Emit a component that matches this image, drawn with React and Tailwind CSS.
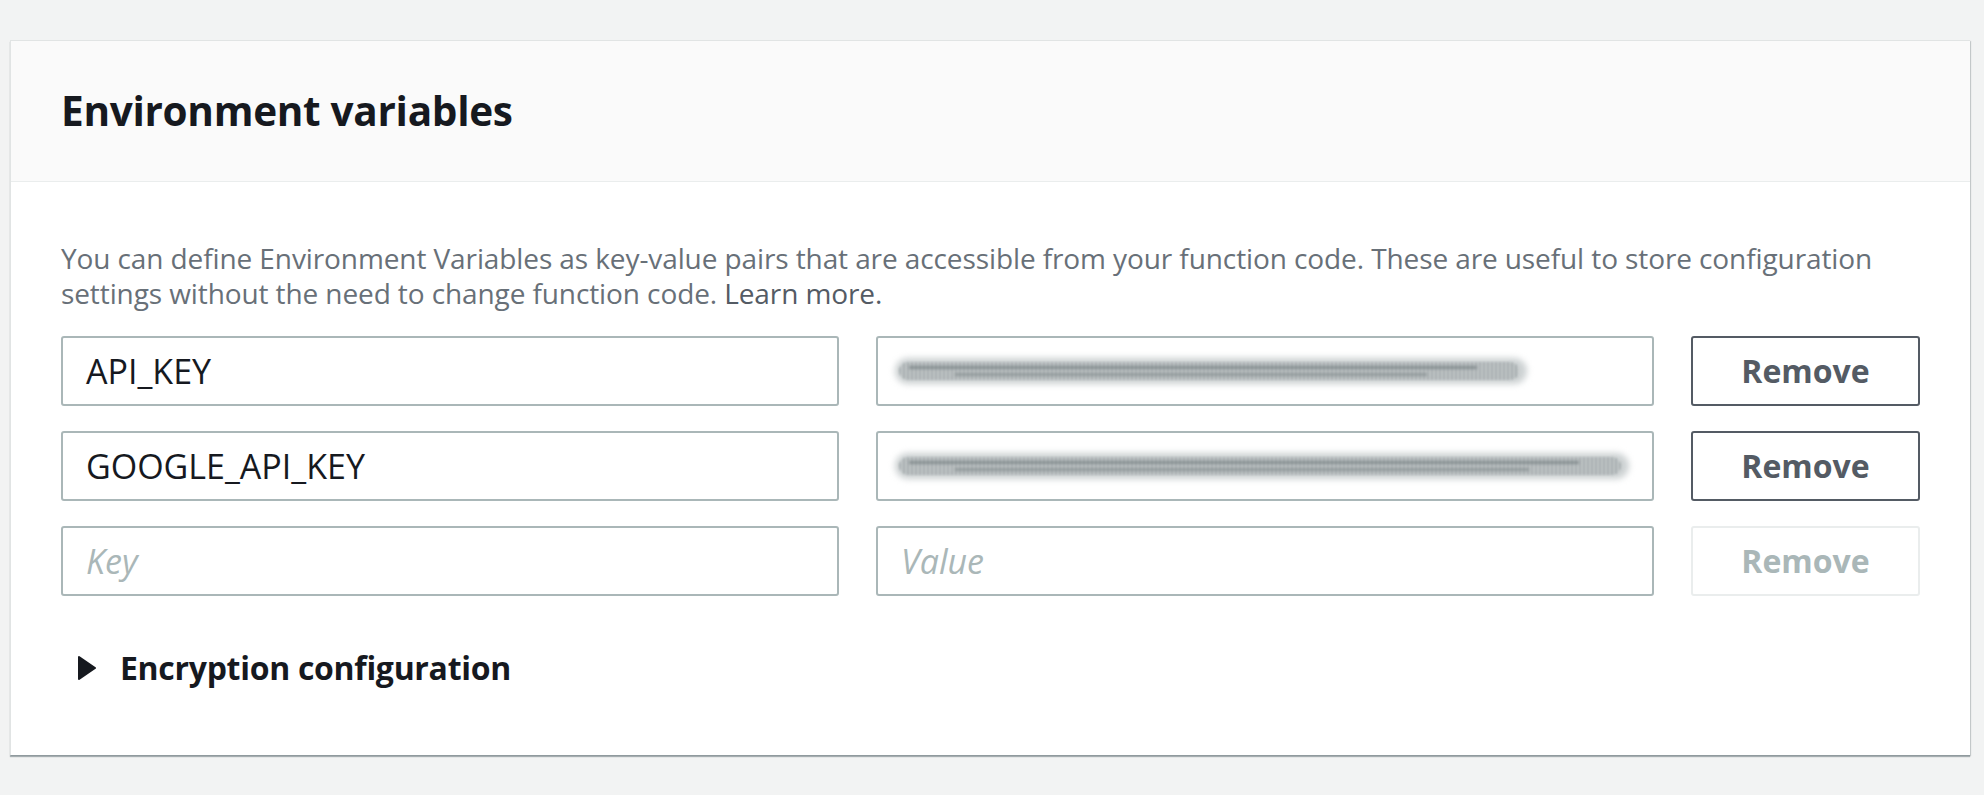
import React from 'react';

const rows = [
    { key: 'API_KEY', blur: 'w-[632px]' },
    { key: 'GOOGLE_API_KEY', blur: 'w-[750px]' },
];

function Smudge({ width }) {
    // redacted value, drawn as a blurred scribble
    return (
        <div className={`relative -ml-[6px] h-[30px] ${width}`}>
            <div className="absolute inset-x-0 top-[2px] h-[26px] rounded-full bg-[#ccd1d2] blur-[3px]" />
            <div className="absolute left-[4px] right-[8px] top-[6px] h-[18px] rounded-full bg-[repeating-linear-gradient(90deg,#959d9f_0px,#959d9f_2px,#c4c9ca_2px,#c4c9ca_4px)] blur-[1px] opacity-75" />
            <div className="absolute left-[14px] right-[50px] top-[10px] h-[3px] bg-[#7a8386] blur-[1.5px] opacity-80" />
            <div className="absolute left-[60px] right-[100px] top-[17px] h-[3px] bg-[#838c8e] blur-[1.5px] opacity-70" />
        </div>
    );
}

function Field({ children }) {
    return (
        <div className="h-[70px] min-w-0 border-2 border-[#aab7b8] rounded-[3px] bg-white flex items-center px-[23px] overflow-hidden">
            {children}
        </div>
    );
}

export default function App() {
    return (
        <div className="min-h-screen bg-[#f2f3f3] pt-[40px] pl-[10px] pr-[14px] pb-[40px] font-['Open_Sans',sans-serif]">
            <div className="bg-white border-l border-t border-[#e1e4e4] shadow-[0_2px_1px_0_rgba(0,28,36,0.3),1px_1px_1px_0_rgba(0,28,36,0.15)]">
                <div className="h-[141px] bg-[#fafafa] border-b border-[#eaeded] flex items-center px-[50px]">
                    <h2 className="text-[40.5px] font-bold text-[#16191f] tracking-[-0.3px]">Environment variables</h2>
                </div>

                <div className="px-[50px] pt-[59px] pb-[67px]">
                    <p className="text-[28px] leading-[35px] text-[#687078] tracking-[-0.1px]">
                        You can define Environment Variables as key-value pairs that are accessible from your function code. These are useful to store configuration settings without the need to change function code. <a className="text-[#545b64]">Learn more.</a>
                    </p>

                    <div className="mt-[25px] grid grid-cols-[minmax(0,1fr)_minmax(0,1fr)_229px] gap-x-[37px] gap-y-[25px]">
                        {rows.map((r) => (
                            <React.Fragment key={r.key}>
                                <Field>
                                    <span className="text-[34px] text-[#16191f]">{r.key}</span>
                                </Field>
                                <Field>
                                    <Smudge width={r.blur} />
                                </Field>
                                <button className="h-[70px] border-2 border-[#545b64] rounded-[3px] bg-white text-[32px] font-bold text-[#545b64]">
                                    Remove
                                </button>
                            </React.Fragment>
                        ))}
                        <Field>
                            <span className="text-[34px] italic text-[#aab7b8]">Key</span>
                        </Field>
                        <Field>
                            <span className="text-[34px] italic text-[#aab7b8]">Value</span>
                        </Field>
                        <button disabled className="h-[70px] border-2 border-[#eaeded] rounded-[3px] bg-white text-[32px] font-bold text-[#aab7b8]">
                            Remove
                        </button>
                    </div>

                    <div className="mt-[52px] flex items-center gap-[24px] pl-[16px]">
                        <svg width="19" height="24" viewBox="0 0 19 24" className="shrink-0">
                            <path d="M2 1 L18 12 L2 23 Z" fill="#16191f" stroke="#16191f" strokeWidth="2" strokeLinejoin="round" />
                        </svg>
                        <span className="text-[32px] leading-[40px] font-bold text-[#16191f] tracking-[-0.3px]">Encryption configuration</span>
                    </div>
                </div>
            </div>
        </div>
    );
}
